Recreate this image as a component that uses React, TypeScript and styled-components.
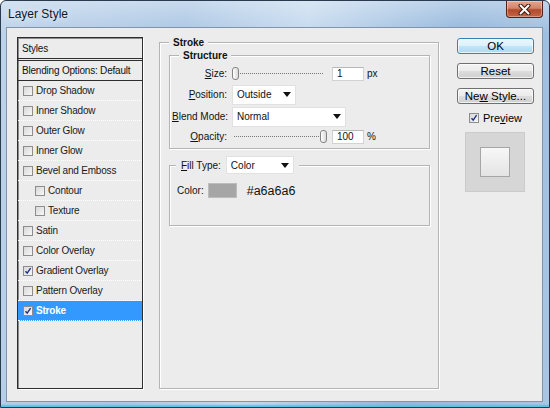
import styled, { createGlobalStyle } from 'styled-components';

const GlobalStyle = createGlobalStyle`
  html, body {
    margin: 0;
    padding: 0;
  }
  body {
    width: 550px;
    height: 408px;
    overflow: hidden;
    background: #ffffff;
    font-family: 'Liberation Sans', Arial, sans-serif;
    color: #111;
  }
`;

type StyleItem = {
  label: string,
  indent?: boolean,
  checked?: boolean,
  selected?: boolean,
}

const styleItems: StyleItem[] = [
  { label: 'Drop Shadow' },
  { label: 'Inner Shadow' },
  { label: 'Outer Glow' },
  { label: 'Inner Glow' },
  { label: 'Bevel and Emboss' },
  { label: 'Contour', indent: true },
  { label: 'Texture', indent: true },
  { label: 'Satin' },
  { label: 'Color Overlay' },
  { label: 'Gradient Overlay', checked: true },
  { label: 'Pattern Overlay' },
  { label: 'Stroke', checked: true, selected: true },
];

const Window = styled.div`
  width: 550px;
  height: 408px;
  box-sizing: border-box;
  display: flex;
  flex-direction: column;
  padding: 0 6px 5px 5px;
  border: 1px solid #2b3b4f;
  border-radius: 6px 6px 0 0;
  background:
    linear-gradient(0deg, #56c3e6 0px, #56c3e6 1px, rgba(86, 195, 230, 0) 3px),
    linear-gradient(180deg, rgba(255, 255, 255, .35) 0%, rgba(255, 255, 255, 0) 8%),
    linear-gradient(100deg, #bdd3ea 0%, #aac6e4 30%, #c4d9ee 50%, #94b7dc 75%, #a9c6e4 100%);
`;

const TitleBar = styled.div`
  height: 26px;
  display: flex;
  align-items: flex-start;
  justify-content: space-between;
  flex: none;
`;

const Title = styled.div`
  padding: 6px 0 0 2px;
  font-size: 12px;
  color: #0f1a26;
  text-shadow: 0 0 6px rgba(255, 255, 255, .9);
`;

const CloseButton = styled.div`
  width: 37px;
  height: 17px;
  box-sizing: border-box;
  display: flex;
  align-items: center;
  justify-content: center;
  border: 1px solid #4e2418;
  border-top: none;
  border-radius: 0 0 4px 4px;
  background: linear-gradient(180deg, #e6a690 0%, #d38369 45%, #b24a2c 55%, #c76447 100%);
  box-shadow: inset 0 0 0 1px rgba(255, 255, 255, .35);
`;

const Client = styled.div`
  flex: 1;
  display: flex;
  align-items: flex-start;
  padding: 8px 10px 0 10px;
  background: #ececec;
  border: 1px solid #8294aa;
  font-size: 10px;
`;

const StylesPanel = styled.div`
  width: 126px;
  height: 352px;
  margin-top: 1px;
  box-sizing: border-box;
  flex: none;
  border: 1px solid #2e2e2e;
  box-shadow: 1px 1px 0 #fff, inset 1px 1px 0 #8a8a8a;
  letter-spacing: -0.2px;
`;

const PanelHeader = styled.div`
  height: 20px;
  display: flex;
  align-items: center;
  padding-left: 4px;
  border-bottom: 3px double #2e2e2e;
`;

const BlendRow = styled.div`
  height: 19px;
  display: flex;
  align-items: center;
  padding-left: 4px;
  border-bottom: 1px solid #2e2e2e;
`;

const Item = styled.div<{ $indent?: boolean, $selected?: boolean }>`
  height: 20px;
  box-sizing: border-box;
  display: flex;
  align-items: center;
  gap: 3px;
  padding-left: ${({ $indent }) => ($indent ? 17 : 5)}px;
  border-bottom: 1px dotted #ffffff;
  background: ${({ $selected }) => ($selected ? '#3399ff' : 'transparent')};
  color: ${({ $selected }) => ($selected ? '#ffffff' : '#1a1a1a')};
  font-weight: ${({ $selected }) => ($selected ? 700 : 400)};
`;

const CheckBox = styled.span`
  width: 10px;
  height: 10px;
  box-sizing: border-box;
  flex: none;
  display: inline-flex;
  align-items: center;
  justify-content: center;
  border: 1px solid #8d8d8d;
  background: linear-gradient(135deg, #d8d8d8 0%, #f7f7f7 100%);
`;

const Check = ({ checked }: { checked?: boolean }) => (
  <CheckBox>
    {checked && (
      <svg width="8" height="8" viewBox="0 0 8 8">
        <path d="M1.5 4.2 L3.2 6.2 L6.6 1.2" fill="none" stroke="#1e2f86" strokeWidth="1.4" />
      </svg>
    )}
  </CheckBox>
);

const Group = styled.fieldset`
  margin: 0;
  min-width: 0;
  box-sizing: border-box;
  border: 1px solid #b4b4b4;
  box-shadow: inset 1px 1px 0 #ffffff, 1px 1px 0 #ffffff;
`;

const Legend = styled.legend<{ $offset?: number }>`
  margin-left: ${({ $offset }) => $offset ?? 0}px;
  padding: 0 4px;
  background: #ececec;
  font-size: 10px;
  font-weight: 700;
  line-height: 13px;
  color: #111;
`;

const StrokeGroup = styled(Group)`
  width: 280px;
  height: 353px;
  margin-left: 16px;
  padding: 0 8px 0 9px;
  flex: none;
`;

const StructureGroup = styled(Group)`
  padding: 2px 6px 3px 2px;
`;

const FieldGrid = styled.div`
  display: grid;
  grid-template-columns: 55px 1fr;
  grid-template-rows: 19px 21px 21px 17px;
  row-gap: 1px;
  column-gap: 5px;
  align-items: center;
`;

const Label = styled.span`
  text-align: right;
  white-space: nowrap;
  color: #111;
`;

const Controls = styled.div`
  display: flex;
  align-items: center;
  gap: 5px;
`;

const SliderTrack = styled.div`
  position: relative;
  width: 95px;
  height: 13px;

  &::before {
    content: '';
    position: absolute;
    left: 2px;
    right: 4px;
    top: 6px;
    border-top: 1px dotted #7a7a7a;
  }
`;

const Thumb = styled.span`
  position: absolute;
  top: 0;
  width: 7px;
  height: 13px;
  box-sizing: border-box;
  border: 1px solid #858585;
  border-radius: 3px;
  background: linear-gradient(90deg, #ffffff 0%, #d9d9d9 100%);
`;

const Slider = ({ value }: { value: number }) => (
  <SliderTrack>
    <Thumb style={{ left: `${(value / 100) * 88}px` }} />
  </SliderTrack>
);

const NumberBox = styled.div`
  width: 32px;
  height: 14px;
  box-sizing: border-box;
  display: flex;
  align-items: center;
  padding-left: 4px;
  background: #ffffff;
  border: 1px solid #d2d2d2;
  border-top-color: #b8b8b8;
`;

const Unit = styled.span`
  margin-left: -2px;
`;

const SelectBox = styled.div<{ $width: number, $height?: number }>`
  width: ${({ $width }) => $width}px;
  height: ${({ $height }) => $height ?? 20}px;
  box-sizing: border-box;
  display: flex;
  align-items: center;
  justify-content: space-between;
  padding: 0 4px 0 4px;
  background: #ffffff;
  border: 1px solid #e1e1e1;
  font-weight: 400;
  color: #111;
`;

const Arrow = () => (
  <svg width="8" height="5" viewBox="0 0 8 5">
    <path d="M0 0 H8 L4 5 Z" fill="#111" />
  </svg>
);

const Select = ({ value, width, height }: { value: string, width: number, height?: number }) => (
  <SelectBox $width={width} $height={height}>
    <span>{value}</span>
    <Arrow />
  </SelectBox>
);

const FillGroup = styled(Group)`
  height: 70px;
  margin-top: 7px;
  padding: 9px 6px 0 7px;
`;

const FillLegend = styled.legend`
  margin-left: -1px;
  padding: 0 5px;
  display: flex;
  align-items: center;
  gap: 5px;
  background: #ececec;
  font-size: 10px;
`;

const ColorRow = styled.div`
  display: flex;
  align-items: center;
  height: 15px;
`;

const Swatch = styled.div<{ $color: string }>`
  width: 29px;
  height: 15px;
  box-sizing: border-box;
  margin-left: 4px;
  background: ${({ $color }) => $color};
  border: 1px solid #bdbdbd;
`;

const HexText = styled.span`
  margin-left: 10px;
  font-size: 12.5px;
  color: #111;
`;

const Side = styled.div`
  width: 77px;
  margin-left: 18px;
  margin-top: 2px;
  flex: none;
  display: flex;
  flex-direction: column;
  align-items: center;
`;

const Button = styled.div<{ $primary?: boolean }>`
  width: 77px;
  height: 16px;
  box-sizing: border-box;
  margin-bottom: 9px;
  display: flex;
  align-items: center;
  justify-content: center;
  border: 1px solid ${({ $primary }) => ($primary ? '#3c7fb1' : '#707070')};
  border-radius: 3px;
  font-size: 11.5px;
  color: #000;
  background: ${({ $primary }) => ($primary
    ? 'linear-gradient(180deg, #ecf7fd 0%, #dcf0fb 50%, #c0e6fb 51%, #a9daf5 100%)'
    : 'linear-gradient(180deg, #f3f3f3 0%, #ebebeb 50%, #dddddd 51%, #cfcfcf 100%)')};
  box-shadow: inset 0 0 0 1px rgba(255, 255, 255, .7);
`;

const PreviewRow = styled.label`
  display: flex;
  align-items: center;
  gap: 4px;
  height: 10px;
  margin-top: 0;
  font-size: 11px;
  color: #000;
`;

const PreviewBox = styled.div`
  width: 60px;
  height: 60px;
  box-sizing: border-box;
  margin-top: 9px;
  margin-right: 2px;
  display: flex;
  align-items: center;
  justify-content: center;
  background: #d6d6d6;
  border: 1px solid #cbcbcb;
`;

const PreviewSquare = styled.div`
  width: 30px;
  height: 30px;
  box-sizing: border-box;
  border: 1px solid #a6a6a6;
  background: linear-gradient(180deg, #f7f7f7 0%, #e4e4e4 100%);
`;

const CloseIcon = () => (
  <svg width="13" height="11" viewBox="0 0 13 11">
    <path d="M2.5 1.5 L10.5 9.5 M10.5 1.5 L2.5 9.5" stroke="#3a1a12" strokeWidth="4" strokeLinecap="round" />
    <path d="M2.5 1.5 L10.5 9.5 M10.5 1.5 L2.5 9.5" stroke="#ffffff" strokeWidth="2" strokeLinecap="round" />
  </svg>
);

const App = () => {
  return (
    <>
      <GlobalStyle />
      <Window>
        <TitleBar>
          <Title>Layer Style</Title>
          <CloseButton>
            <CloseIcon />
          </CloseButton>
        </TitleBar>

        <Client>
          <StylesPanel>
            <PanelHeader>Styles</PanelHeader>
            <BlendRow>Blending Options: Default</BlendRow>
            {styleItems.map(item => (
              <Item key={item.label} $indent={item.indent} $selected={item.selected}>
                <Check checked={item.checked} />
                <span>{item.label}</span>
              </Item>
            ))}
          </StylesPanel>

          <StrokeGroup>
            <Legend>Stroke</Legend>

            <StructureGroup>
              <Legend $offset={7}>Structure</Legend>
              <FieldGrid>
                <Label><u>S</u>ize:</Label>
                <Controls>
                  <Slider value={0} />
                  <NumberBox>1</NumberBox>
                  <Unit>px</Unit>
                </Controls>

                <Label><u>P</u>osition:</Label>
                <Controls>
                  <Select value="Outside" width={64} />
                </Controls>

                <Label><u>B</u>lend Mode:</Label>
                <Controls>
                  <Select value="Normal" width={114} />
                </Controls>

                <Label><u>O</u>pacity:</Label>
                <Controls>
                  <Slider value={100} />
                  <NumberBox>100</NumberBox>
                  <Unit>%</Unit>
                </Controls>
              </FieldGrid>
            </StructureGroup>

            <FillGroup>
              <FillLegend>
                <span><u>F</u>ill Type:</span>
                <Select value="Color" width={68} height={18} />
              </FillLegend>
              <ColorRow>
                <span>Color:</span>
                <Swatch $color="#a6a6a6" />
                <HexText>#a6a6a6</HexText>
              </ColorRow>
            </FillGroup>
          </StrokeGroup>

          <Side>
            <Button $primary>OK</Button>
            <Button>Reset</Button>
            <Button><span>Ne<u>w</u> Style...</span></Button>
            <PreviewRow>
              <Check checked />
              <span>Pre<u>v</u>iew</span>
            </PreviewRow>
            <PreviewBox>
              <PreviewSquare />
            </PreviewBox>
          </Side>
        </Client>
      </Window>
    </>
  );
};

export default App;
